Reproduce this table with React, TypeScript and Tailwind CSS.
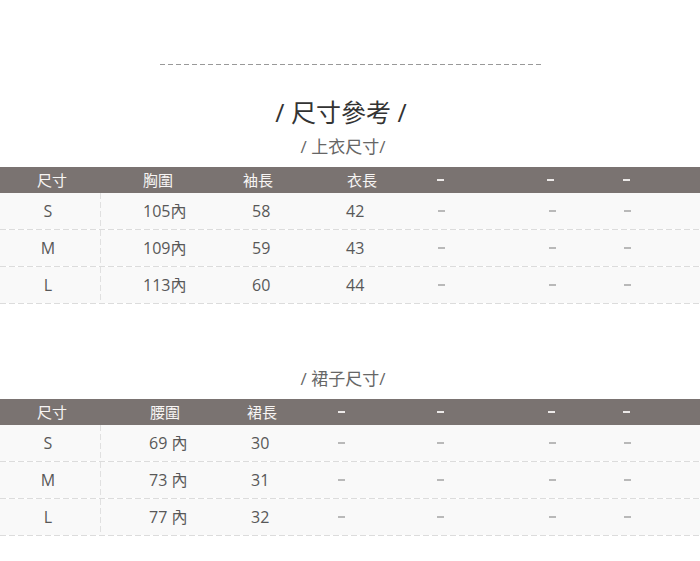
const font = "font-['Open_Sans','Noto_Sans_CJK_TC',sans-serif]";

type Table = {
  title: string;
  widths: string[];
  headPad: string[];
  dataPad: string[];
  head: string[];
  rows: string[][];
};

const hDash = "bg-[linear-gradient(to_right,#dcdcdc_65%,transparent_0)] bg-[length:9px_1px] bg-repeat-x";
const vDash = "bg-[linear-gradient(to_bottom,#e0e0e0_65%,transparent_0)] bg-[length:1px_9px] bg-repeat-y";

const top: Table = {
  title: "/ 上衣尺寸/",
  widths: ["w-[100px]", "w-[139px]", "w-[100px]", "w-[90px]", "w-[110px]", "w-[75px]", "w-[85px]"],
  headPad: ["", "pl-[42px]", "pl-[3px]", "pl-[7px]", "pl-[7px]", "pl-[7px]", "pl-[8px]"],
  dataPad: ["", "pl-[42px]", "pl-[12px]", "pl-[6px]", "pl-[8px]", "pl-[9px]", "pl-[9px]"],
  head: ["尺寸", "胸圍", "袖長", "衣長", "-", "-", "-"],
  rows: [
    ["S", "105內", "58", "42", "-", "-", "-"],
    ["M", "109內", "59", "43", "-", "-", "-"],
    ["L", "113內", "60", "44", "-", "-", "-"],
  ],
};

const bottom: Table = {
  title: "/ 裙子尺寸/",
  widths: ["w-[100px]", "w-[139px]", "w-[90px]", "w-[100px]", "w-[110px]", "w-[75px]", "w-[85px]"],
  headPad: ["", "pl-[49px]", "pl-[7px]", "pl-[8px]", "pl-[7px]", "pl-[8px]", "pl-[8px]"],
  dataPad: ["", "pl-[48px]", "pl-[11px]", "pl-[8px]", "pl-[7px]", "pl-[9px]", "pl-[9px]"],
  head: ["尺寸", "腰圍", "裙長", "-", "-", "-", "-"],
  rows: [
    ["S", "69 內", "30", "-", "-", "-", "-"],
    ["M", "73 內", "31", "-", "-", "-", "-"],
    ["L", "77 內", "32", "-", "-", "-", "-"],
  ],
};

function Cell({ text, head }: { text: string; head?: boolean }) {
  if (text === "-") {
    return <span className={`block w-[7px] h-[2px] ${head ? "bg-[#ece9e8]" : "bg-[#b9b9b9]"}`} />;
  }
  return <span>{text}</span>;
}

function SizeTable({ t }: { t: Table }) {
  return (
    <div>
      <p className="text-center text-[17px] leading-5 text-[#666] pr-[14px]">{t.title}</p>
      <div className="mt-[10px] h-[26px] flex items-center bg-[#7a7371] text-[#f7f5f4] text-[15px]">
        {t.head.map((h, i) => (
          <div
            key={i}
            className={`${i === 0 ? "w-[101px] pl-[3px] justify-center" : t.widths[i]} ${t.headPad[i]} h-full flex items-center`}
          >
            <Cell text={h} head />
          </div>
        ))}
      </div>
      {t.rows.map((r, ri) => (
        <div key={ri}>
          <div className="h-[36px] flex bg-[#f9f9f9] text-[16px] text-[#585858]">
            {r.map((c, i) => (
              <div key={i} className="contents">
                <div
                  className={`${t.widths[i]} ${t.dataPad[i]} h-full flex items-center ${i === 0 ? "justify-center pr-[4px]" : ""}`}
                >
                  <Cell text={c} />
                </div>
                {i === 0 && <div className={`w-px h-full ${vDash}`} />}
              </div>
            ))}
          </div>
          <div className={`h-px ${hDash}`} />
        </div>
      ))}
    </div>
  );
}

export default function App() {
  return (
    <div className={`w-[700px] h-[561px] bg-white ${font}`}>
      <div className="pt-[64px] flex justify-center">
        <div className="w-[382px] h-px ml-[2px] bg-[linear-gradient(to_right,#999_62%,transparent_0)] bg-[length:8px_1px] bg-repeat-x" />
      </div>
      <h1 className="mt-[32px] text-center text-[25px] leading-[30px] text-[#333] pr-[18px]">/ 尺寸參考 /</h1>
      <div className="mt-[10px]">
        <SizeTable t={top} />
      </div>
      <div className="mt-[65px]">
        <SizeTable t={bottom} />
      </div>
    </div>
  );
}
